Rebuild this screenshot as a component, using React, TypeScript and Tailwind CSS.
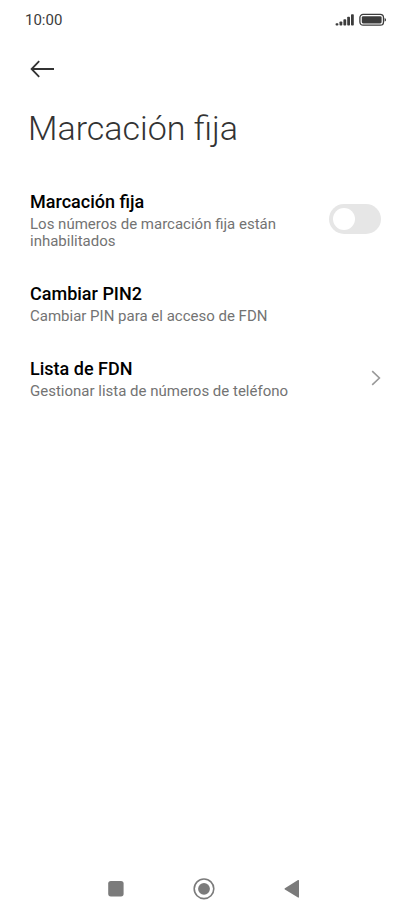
import React, { useState } from 'react';

type SettingTextProps = {
  title: string;
  summary: string;
}

function SettingText({ title, summary }: SettingTextProps) {
  return (
    <span className="block min-w-0 max-w-[272px] pt-0.5">
      <span className="block text-[18px] leading-6 font-medium text-black">{title}</span>
      <span className="mt-0.5 block text-[15px] leading-[17px] text-[#737373]">{summary}</span>
    </span>
  );
}

function StatusBar() {
  return (
    <div className="flex h-10 items-center justify-between pl-[25px] pr-6 text-[#3c3c3c]">
      <span className="text-[15px] leading-5">10:00</span>
      <div className="flex items-center gap-1">
        {/* Signal */}
        <svg width="20" height="14" viewBox="0 0 20 14" fill="currentColor" aria-hidden="true">
          <rect x="0.6" y="10.2" width="2.8" height="2.4" rx="0.8" />
          <rect x="4.5" y="8.4" width="2.8" height="4.2" rx="0.8" />
          <rect x="8.4" y="6.2" width="2.8" height="6.4" rx="0.8" />
          <rect x="12.2" y="3.8" width="2.8" height="8.8" rx="0.8" />
          <rect x="16" y="1.2" width="2.8" height="11.4" rx="0.8" />
        </svg>
        {/* Battery */}
        <svg width="28" height="14" viewBox="0 0 28 14" fill="none" aria-hidden="true">
          <rect x="0.9" y="1.4" width="23.6" height="10.8" rx="3.2" stroke="currentColor" strokeWidth="1.3" />
          <rect x="2.8" y="3.2" width="19.8" height="7.2" rx="1.4" fill="currentColor" />
          <path d="M25.6 5c.9.2 1.4.9 1.4 1.8s-.5 1.6-1.4 1.8z" fill="currentColor" />
        </svg>
      </div>
    </div>
  );
}

function NavBar() {
  return (
    <nav className="mt-auto flex h-[51px] items-center justify-center gap-16 pr-1 text-[#7b7b7b]">
      <button type="button" aria-label="Recientes" className="flex size-6 items-center justify-center">
        <svg width="24" height="24" viewBox="0 0 24 24" fill="currentColor">
          <rect x="4.2" y="4" width="15.4" height="15.4" rx="2.6" />
        </svg>
      </button>
      <button type="button" aria-label="Inicio" className="flex size-6 items-center justify-center">
        <svg width="24" height="24" viewBox="0 0 24 24" fill="none">
          <circle cx="12" cy="11.8" r="9.8" stroke="currentColor" strokeWidth="1.6" />
          <circle cx="12" cy="11.8" r="5.9" fill="currentColor" />
        </svg>
      </button>
      <button type="button" aria-label="Atrás" className="flex size-6 items-center justify-center">
        <svg width="24" height="24" viewBox="0 0 24 24" fill="currentColor">
          <path d="M19 3.6v16.4c0 .6-.5.8-1 .5L4.9 12.4c-.5-.3-.5-.9 0-1.2L18 3.1c.5-.3 1-.1 1 .5z" />
        </svg>
      </button>
    </nav>
  );
}

export default function App() {
  const [enabled, setEnabled] = useState(false);

  return (
    <div className="flex min-h-screen flex-col bg-white font-[Roboto,sans-serif]">
      <StatusBar />

      <header className="px-7">
        <button type="button" aria-label="Volver" className="flex h-[58px] items-center text-[#333333]">
          <svg width="28" height="20" viewBox="0 0 28 20" fill="none" stroke="currentColor" strokeWidth="1.8" aria-hidden="true">
            <path d="M11.2 2.2 3.6 10l7.6 7.8M3.6 10H26" />
          </svg>
        </button>
        <h1 className="mt-[10px] text-[34px] leading-10 font-light text-[#333333]">Marcación fija</h1>
      </header>

      <main className="mt-[26px]">
        {/* Toggle row */}
        <label className="flex cursor-pointer items-center justify-between px-[30px] pt-3.5 pb-4">
          <SettingText title="Marcación fija" summary="Los números de marcación fija están inhabilitados" />
          <input
            type="checkbox"
            role="switch"
            checked={enabled}
            onChange={(e) => setEnabled(e.target.checked)}
            className="
              h-[30px] w-[52px] shrink-0 cursor-pointer appearance-none rounded-full bg-[#e6e6e6] p-1
              before:block before:size-[22px] before:rounded-full before:bg-white before:transition-transform
              checked:bg-blue-500 checked:before:translate-x-[22px]
            "
          />
        </label>

        <button type="button" className="flex w-full items-center px-[30px] pt-3.5 pb-4 text-left">
          <SettingText title="Cambiar PIN2" summary="Cambiar PIN para el acceso de FDN" />
        </button>

        <a href="#lista-fdn" className="flex items-center justify-between px-[30px] pt-3.5 pb-4">
          <SettingText title="Lista de FDN" summary="Gestionar lista de números de teléfono" />
          <svg width="10" height="16" viewBox="0 0 10 16" fill="none" stroke="#999999" strokeWidth="1.6" className="shrink-0" aria-hidden="true">
            <path d="M1.2 1.2 8.4 8l-7.2 6.8" />
          </svg>
        </a>
      </main>

      <NavBar />
    </div>
  );
}
